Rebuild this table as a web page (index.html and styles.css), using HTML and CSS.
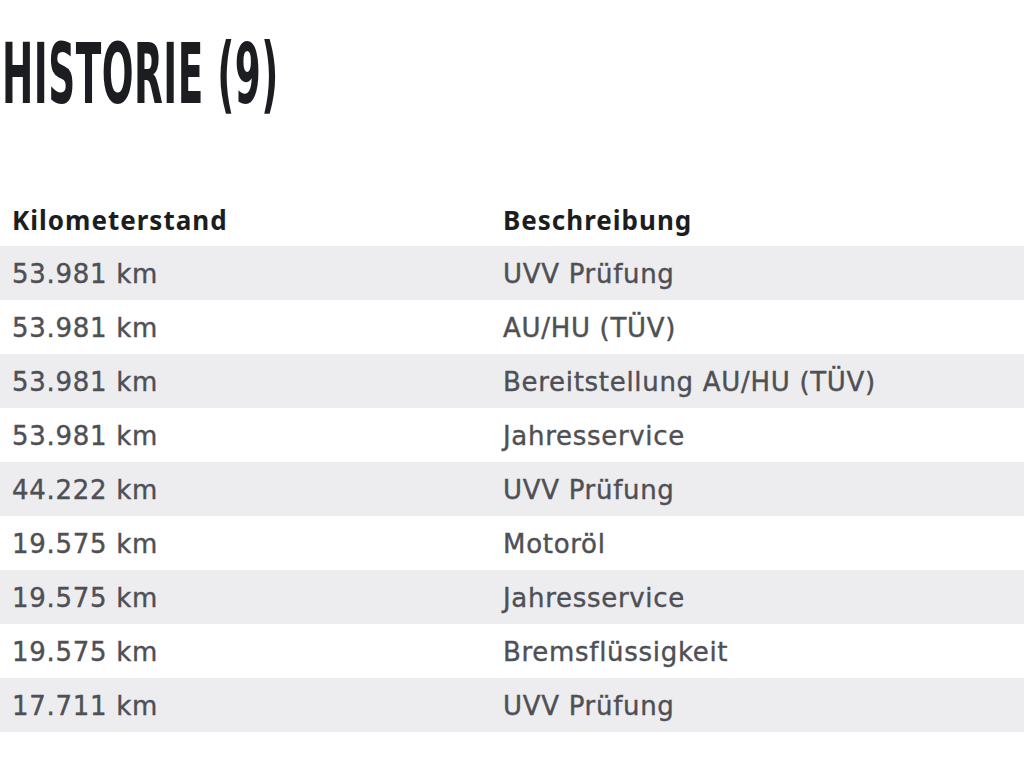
FILE: index.html
```html
<!DOCTYPE html>
<html lang="de">
<head>
<meta charset="utf-8">
<title>Historie</title>
<link rel="stylesheet" href="styles.css">
</head>
<body>
<h1 class="title"><span class="title-text">HISTORIE (9)</span></h1>
<table class="history">
  <thead>
    <tr><th>Kilometerstand</th><th>Beschreibung</th></tr>
  </thead>
  <tbody>
    <tr><td>53.981 km</td><td>UVV Prüfung</td></tr>
    <tr><td>53.981 km</td><td>AU/HU (TÜV)</td></tr>
    <tr><td>53.981 km</td><td>Bereitstellung AU/HU (TÜV)</td></tr>
    <tr><td>53.981 km</td><td>Jahresservice</td></tr>
    <tr><td>44.222 km</td><td>UVV Prüfung</td></tr>
    <tr><td>19.575 km</td><td>Motoröl</td></tr>
    <tr><td>19.575 km</td><td>Jahresservice</td></tr>
    <tr><td>19.575 km</td><td>Bremsflüssigkeit</td></tr>
    <tr><td>17.711 km</td><td>UVV Prüfung</td></tr>
  </tbody>
</table>
</body>
</html>
```

FILE: styles.css
```css
html, body {
  margin: 0;
  padding: 0;
  background: #ffffff;
}
body {
  font-family: "DejaVu Sans", "Noto Sans", sans-serif;
  color: #4f5055;
}
.title {
  margin: 0;
  padding: 29px 0 0 2px;
  height: 160px;
  box-sizing: border-box;
  font-family: "DejaVu Sans Condensed", "DejaVu Sans", sans-serif;
  font-weight: 700;
  font-size: 84px;
  line-height: 90px;
  color: #1c1d20;
  white-space: nowrap;
}
.title-text {
  display: inline-block;
  transform: scaleX(0.495);
  transform-origin: left center;
  letter-spacing: 1px;
}
.history {
  width: 100%;
  border-collapse: collapse;
  margin-top: 32px;
  font-size: 26px;
}
.history th,
.history td {
  height: 54px;
  box-sizing: border-box;
  padding: 2px 0 0 12px;
  text-align: left;
  vertical-align: middle;
  line-height: 52px;
}
.history td {
  font-weight: 400;
  letter-spacing: 0.7px;
  -webkit-text-stroke: 0.4px #4f5055;
}
.history th {
  font-family: "Noto Sans", "DejaVu Sans", sans-serif;
  font-weight: 700;
  color: #1c1d20;
  letter-spacing: 1px;
  width: 491px;
}
.history th:last-child {
  width: auto;
}
.history tbody tr:nth-child(odd) {
  background: #ededf0;
}
```
